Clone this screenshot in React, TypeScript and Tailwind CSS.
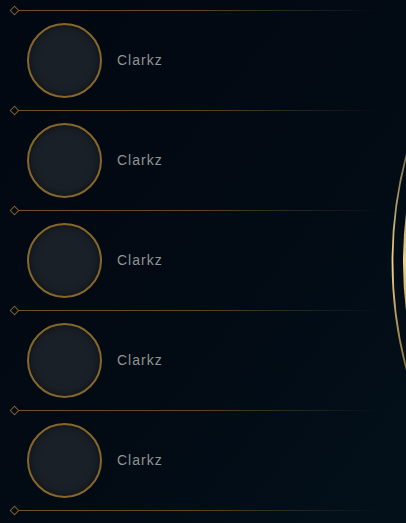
import React from "react";

function Divider() {
  return (
    <div className="relative h-[8px] flex items-center">
      <div className="ml-[11px] w-[7px] h-[7px] rotate-45 border-[1.5px] border-[#7a5c2c] shrink-0" />
      <div className="ml-[1px] h-px w-[360px] bg-gradient-to-r from-[#6e5428] via-[#5a4522] to-transparent" />
    </div>
  );
}

function Row() {
  return (
    <div className="h-[92px] flex items-center pt-[1px]">
      <div className="ml-[27px] w-[75px] h-[75px] rounded-full border-2 border-[#85672c] bg-[#1a2027] shadow-[inset_0_0_8px_rgba(0,0,0,0.5)] shrink-0" />
      <span
        className="ml-[15px] text-[14px] tracking-[1px] text-[#8f9495]"
        style={{ fontFamily: '"Liberation Sans", Arial, sans-serif' }}
      >
        Clarkz
      </span>
    </div>
  );
}

export default function App() {
  return (
    <div className="relative w-[406px] h-[523px] overflow-hidden bg-gradient-to-br from-[#020812] via-[#020a13] to-[#03101a]">
      <div className="pt-[6px] flex flex-col">
        <Divider />
        <Row />
        <Divider />
        <Row />
        <Divider />
        <Row />
        <Divider />
        <Row />
        <Divider />
        <Row />
        <Divider />
      </div>
      <svg className="absolute left-0 top-0 pointer-events-none" width="406" height="523">
        <defs>
          <linearGradient id="g1" x1="0" y1="150" x2="0" y2="375" gradientUnits="userSpaceOnUse">
            <stop offset="0" stopColor="#c8aa6e" stopOpacity="0.6" />
            <stop offset="0.5" stopColor="#f0d38a" />
            <stop offset="1" stopColor="#b8923f" stopOpacity="0.7" />
          </linearGradient>
        </defs>
        <circle cx="808" cy="262" r="415.5" fill="none" stroke="url(#g1)" strokeWidth="1.8" />
        <circle cx="808" cy="262" r="403" fill="none" stroke="url(#g1)" strokeWidth="4" />
      </svg>
    </div>
  );
}
